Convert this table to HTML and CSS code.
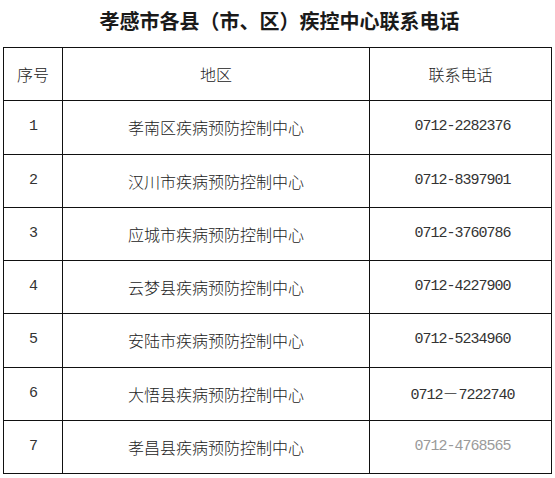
FILE: index.html
```html
<!DOCTYPE html>
<html lang="zh-CN">
<head>
<meta charset="utf-8">
<title>孝感市各县（市、区）疾控中心联系电话</title>
<link rel="stylesheet" href="styles.css">
</head>
<body>
<div class="page">
  <h1 class="title">孝感市各县（市、区）疾控中心联系电话</h1>
  <table class="contacts">
    <colgroup>
      <col class="c-no">
      <col class="c-area">
      <col class="c-tel">
    </colgroup>
    <thead>
      <tr><th>序号</th><th>地区</th><th>联系电话</th></tr>
    </thead>
    <tbody>
      <tr><td class="num">1</td><td>孝南区疾病预防控制中心</td><td class="tel">0712-2282376</td></tr>
      <tr><td class="num">2</td><td>汉川市疾病预防控制中心</td><td class="tel">0712-8397901</td></tr>
      <tr><td class="num">3</td><td>应城市疾病预防控制中心</td><td class="tel">0712-3760786</td></tr>
      <tr><td class="num">4</td><td>云梦县疾病预防控制中心</td><td class="tel">0712-4227900</td></tr>
      <tr><td class="num">5</td><td>安陆市疾病预防控制中心</td><td class="tel">0712-5234960</td></tr>
      <tr><td class="num">6</td><td>大悟县疾病预防控制中心</td><td class="tel">0712<span class="wide-dash">－</span>7222740</td></tr>
      <tr><td class="num">7</td><td>孝昌县疾病预防控制中心</td><td class="tel faded">0712-4768565</td></tr>
    </tbody>
  </table>
</div>
</body>
</html>
```
FILE: styles.css
```css
html, body {
  margin: 0;
  padding: 0;
  background: #ffffff;
}

body {
  font-family: "Noto Sans CJK SC", "Noto Sans", sans-serif;
  color: #222;
}

.page {
  width: 555px;
  padding: 0 4px 0 3px;
  box-sizing: border-box;
}

.title {
  margin: 0;
  height: 47px;
  line-height: 42px;
  font-size: 20px;
  font-weight: 700;
  text-align: center;
  color: #1a1a1a;
  padding-left: 5px;
}

.contacts {
  width: 548px;
  border-collapse: collapse;
  table-layout: fixed;
}

.c-no { width: 59px; }
.c-area { width: 307px; }
.c-tel { width: 182px; }

.contacts th,
.contacts td {
  border: 1px solid #111;
  height: 52.25px;
  padding: 0;
  text-align: center;
  vertical-align: middle;
  font-size: 16px;
  font-weight: 300;
  line-height: 20px;
  color: #222;
}

.contacts th {
  font-weight: 300;
}

.contacts td.num,
.contacts td.tel {
  font-family: "Liberation Mono", "DejaVu Sans Mono", monospace;
  font-size: 15px;
  letter-spacing: -1px;
  color: #333;
}

.contacts td.tel {
  padding-left: 4px;
}

.wide-dash {
  font-family: "Noto Sans CJK SC", sans-serif;
  font-size: 16px;
  letter-spacing: 0;
}

.contacts td.faded {
  color: #9a9a9a;
}
```
